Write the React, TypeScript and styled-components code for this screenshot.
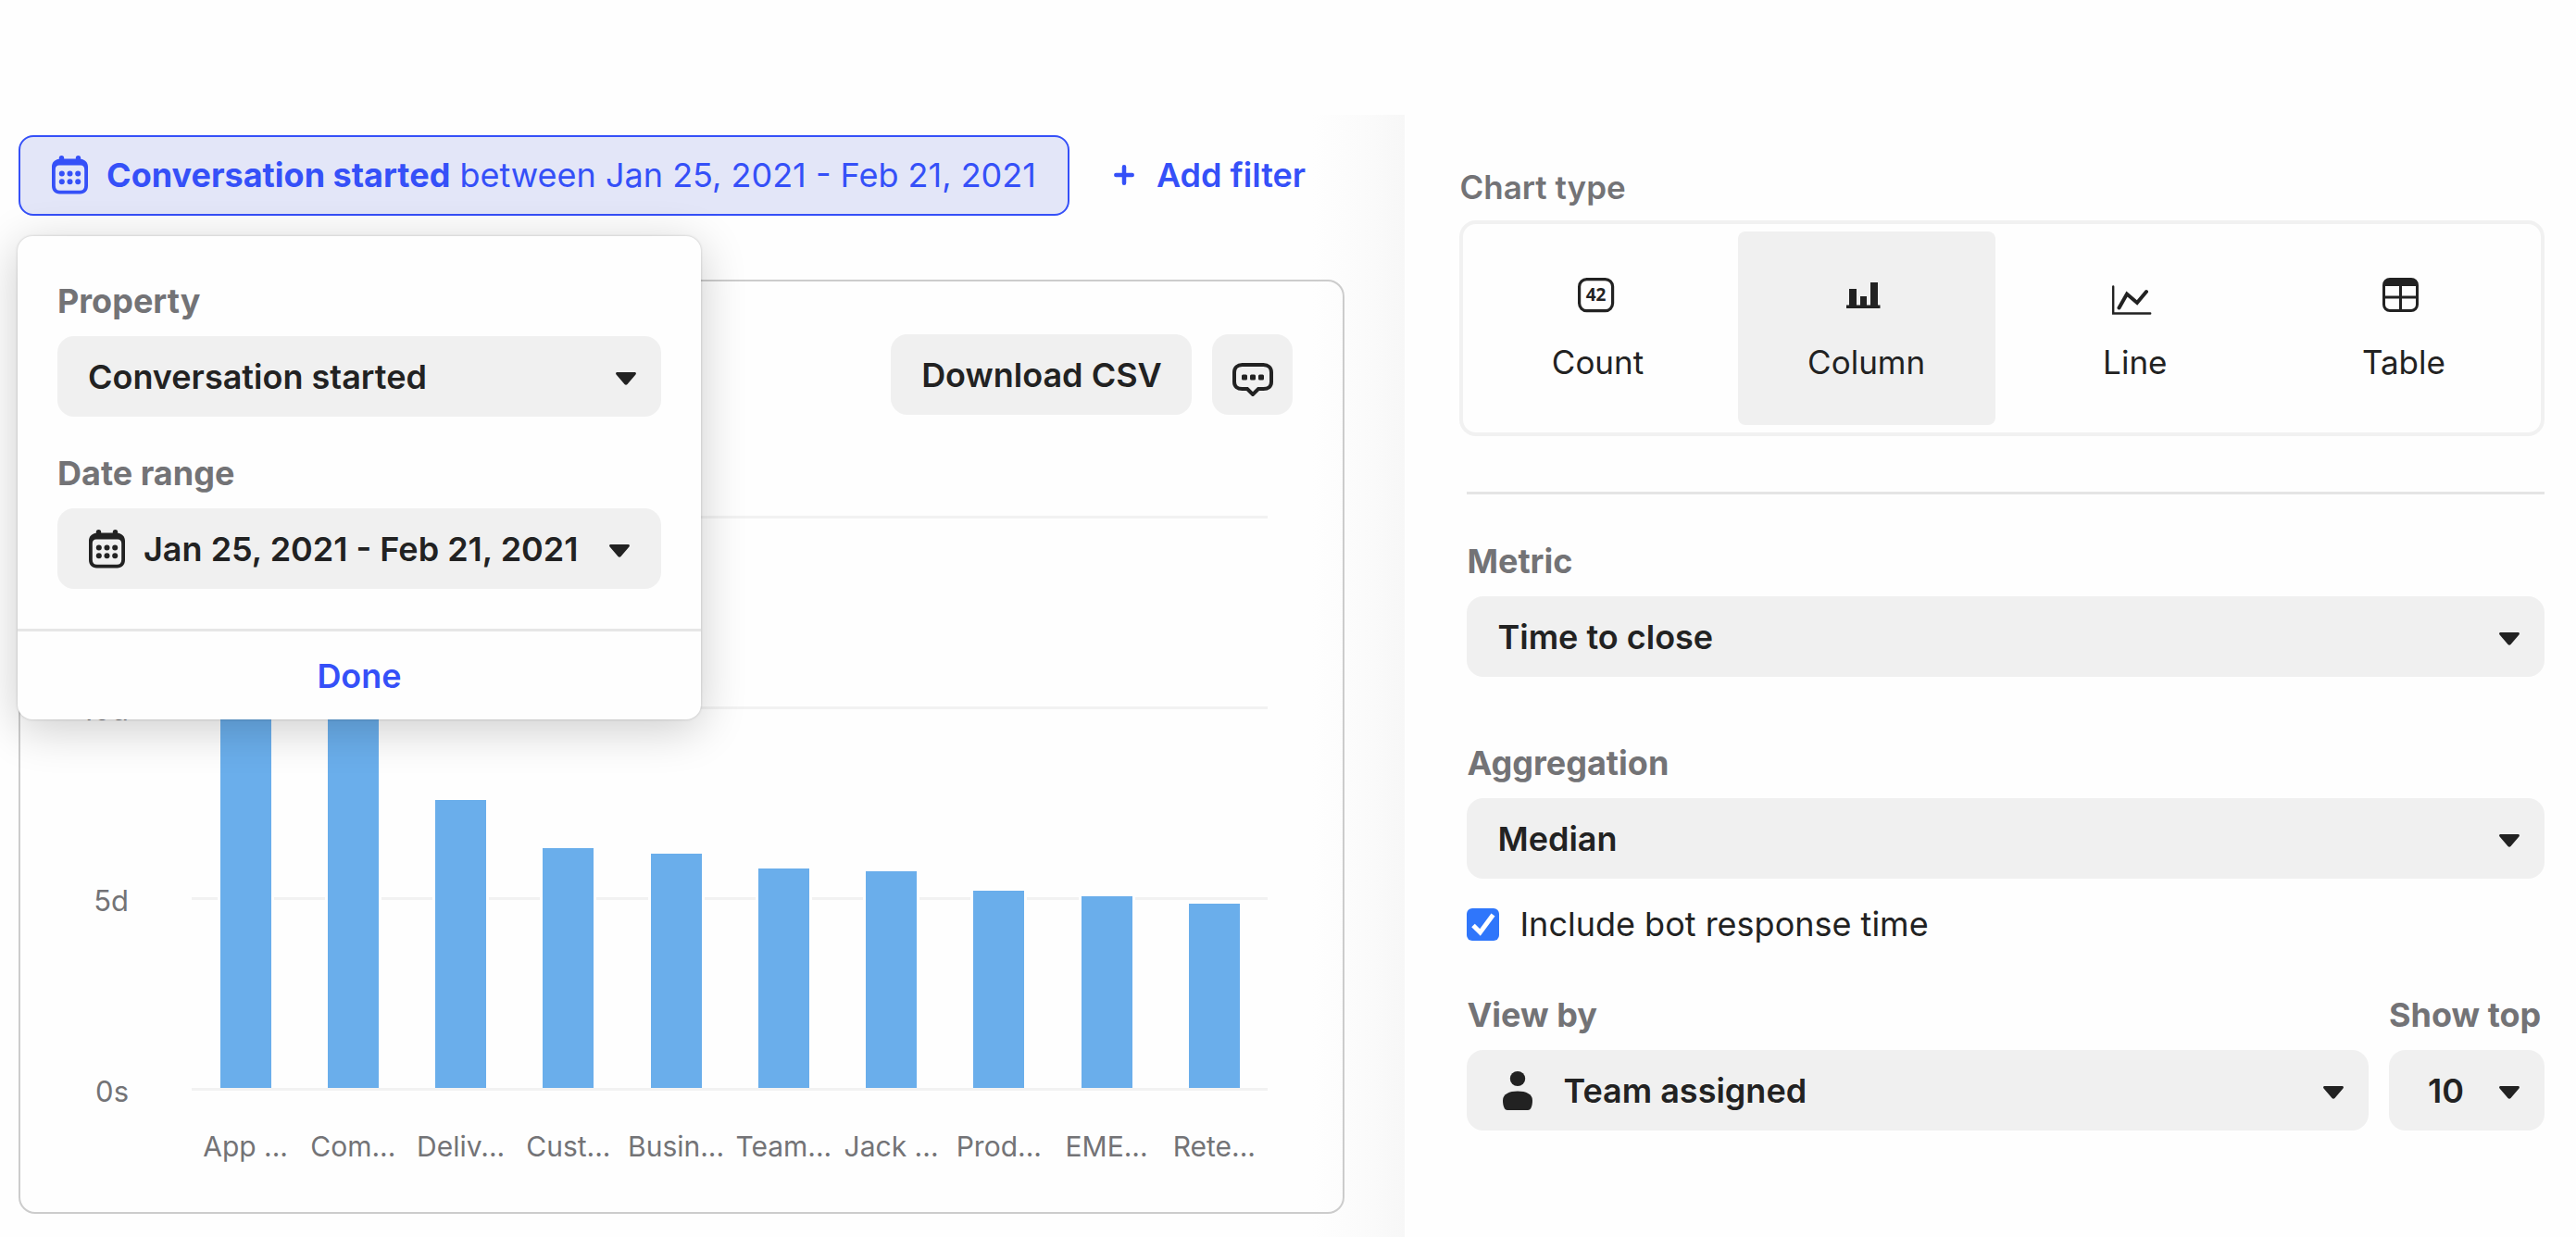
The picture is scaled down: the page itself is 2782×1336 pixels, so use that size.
import React, { useState } from "react";
import styled, { createGlobalStyle, css } from "styled-components";

const blue = "#3550f8";
const ink = "#222222";
const muted = "#737376";
const fill = "#f0f0f0";

const GlobalStyle = createGlobalStyle`
  *, *::before, *::after { box-sizing: border-box; }
  body {
    margin: 0;
    background: #fefefe;
    color: ${ink};
    font-family: Inter, "Liberation Sans", sans-serif;
    font-size: 36px;
    line-height: 44px;
  }
  button, select, input { font: inherit; color: inherit; }
`;

const Page = styled.div`
  display: grid;
  grid-template-columns: 6fr 5fr;
  min-height: 100vh;
  padding-top: 124px;
`;

const Report = styled.main`
  min-width: 0;
  padding: 22px 65px 25px 20px;
  background: linear-gradient(to left, #f7f7f7, #fbfbfb 45px, #fefefe 100px);
`;

const FilterBar = styled.div`
  display: flex;
  align-items: center;
  gap: 48px;
  margin-bottom: 69px;
`;

const FilterAnchor = styled.div`
  position: relative;
`;

const FilterPill = styled.button`
  display: flex;
  align-items: center;
  gap: 20px;
  height: 87px;
  padding: 0 34px 2px;
  border: 2px solid ${blue};
  border-radius: 16px;
  background: #e3e6f8;
  color: ${blue};
  white-space: nowrap;
  cursor: pointer;
`;

const Strong = styled.strong`
  font-weight: 700;
`;

const LinkButton = styled.button`
  display: flex;
  align-items: center;
  gap: 24px;
  padding: 0 0 2px;
  border: 0;
  background: none;
  color: ${blue};
  font-weight: 600;
  white-space: nowrap;
  cursor: pointer;
`;

const Popover = styled.div`
  position: absolute;
  z-index: 1;
  top: calc(100% + 22px);
  left: -1px;
  width: 738px;
  border-radius: 16px;
  background: #fefefe;
  box-shadow: 0 0 3px rgba(0, 0, 0, 0.2), 0 10px 50px rgba(0, 0, 0, 0.2);
`;

const PopoverBody = styled.div`
  display: flex;
  flex-direction: column;
  gap: 39px;
  padding: 48px 43px 43px;
`;

const DoneButton = styled.button`
  display: block;
  width: 100%;
  height: 98px;
  border: 0;
  border-top: 3px solid #e6e6e6;
  background: none;
  color: ${blue};
  font-weight: 600;
  cursor: pointer;
`;

const FieldBox = styled.div`
  display: flex;
  flex-direction: column;
  gap: 16px;
  min-width: 0;
`;

const FieldLabel = styled.label`
  color: ${muted};
  font-weight: 700;
  white-space: nowrap;
`;

const control = css`
  height: 87px;
  border: 0;
  border-radius: 18px;
  background: ${fill};
  font-weight: 600;
  cursor: pointer;
`;

const SelectShell = styled.div`
  display: grid;
  align-items: center;
  > * { grid-area: 1 / 1; }
`;

const NativeSelect = styled.select<{ $inset: number }>`
  ${control}
  width: 100%;
  padding: 0 60px 0 ${(p) => p.$inset}px;
  appearance: none;
`;

const CaretSlot = styled.span`
  display: flex;
  justify-self: end;
  padding-right: 27px;
  pointer-events: none;
`;

const IconSlot = styled.span`
  display: flex;
  z-index: 1;
  justify-self: start;
  padding-left: 39px;
  pointer-events: none;
`;

const DateButton = styled.button`
  ${control}
  display: flex;
  align-items: center;
  gap: 20px;
  padding: 0 34px;
  white-space: nowrap;
  > :last-child { margin-left: auto; }
`;

const Card = styled.section`
  display: flex;
  flex-direction: column;
  padding: 57px 54px 49px 60px;
  border: 2px solid #cccccc;
  border-radius: 18px;
`;

const Toolbar = styled.div`
  display: flex;
  justify-content: flex-end;
  gap: 22px;
  margin-bottom: 91px;
`;

const ToolButton = styled.button<{ $square?: boolean }>`
  ${control}
  display: flex;
  align-items: center;
  justify-content: center;
  padding: 0;
  width: ${(p) => (p.$square ? "87px" : "325px")};
  white-space: nowrap;
`;

const Chart = styled.div`
  display: grid;
  grid-template-columns: 57px 1fr;
  column-gap: 68px;
  padding-right: 27px;
  color: ${muted};
  font-size: 31px;
`;

const YAxis = styled.div`
  display: flex;
  flex-direction: column;
  justify-content: space-between;
  text-align: right;
`;

const Plot = styled.div`
  display: grid;
  padding: 18px 0 23px;
  height: 662px;
  > * { grid-area: 1 / 1; }
`;

const GridLines = styled.div`
  display: flex;
  flex-direction: column;
  justify-content: space-between;
`;

const GridLine = styled.div`
  height: 3px;
  background: #f2f2f2;
`;

const Bars = styled.div`
  display: grid;
  grid-template-columns: repeat(10, 1fr);
  align-items: end;
  justify-items: center;
  padding-bottom: 3px;
`;

const Bar = styled.div`
  width: 55px;
  background: #6aaeeb;
  box-shadow: -3px 0 #fefefe, 3px 0 #fefefe;
`;

const XAxis = styled.div`
  display: grid;
  grid-column: 2;
  grid-template-columns: repeat(10, 1fr);
  margin-top: 15px;
  font-size: 30px;
  text-align: center;
  white-space: nowrap;
`;

const Settings = styled.aside`
  min-width: 0;
  padding: 56px 34px 40px 59px;
`;

const ChartTypes = styled.fieldset`
  min-width: 0;
  margin: 0 0 60px;
  padding: 0;
  border: 0;
  font-size: 35px;
`;

const Legend = styled.legend`
  padding: 0;
  margin-bottom: 14px;
  color: ${muted};
  font-weight: 600;
`;

const TypeGrid = styled.div`
  display: grid;
  grid-template-columns: repeat(4, 1fr);
  padding-right: 3px;
  border: 4px solid #f1f1f1;
  border-radius: 18px;
`;

const TypeOption = styled.label`
  display: flex;
  flex-direction: column;
  align-items: center;
  gap: 29px;
  margin: 8px 6px;
  padding: 50px 0 46px;
  border-radius: 8px;
  cursor: pointer;
  &:has(input:checked) { background: ${fill}; }
`;

const HiddenRadio = styled.input`
  position: absolute;
  opacity: 0;
  pointer-events: none;
`;

const Options = styled.div`
  padding: 50px 0 0;
  margin-left: 8px;
  border-top: 3px solid #e5e5e5;
`;

const Row = styled.div`
  display: grid;
  grid-template-columns: 1fr 168px;
  gap: 22px;
  margin-top: 54px;
`;

const AggregationGroup = styled.div`
  display: flex;
  flex-direction: column;
  gap: 27px;
  margin-top: 71px;
`;

const CheckRow = styled.label`
  display: flex;
  align-items: center;
  gap: 22px;
`;

const CheckShell = styled.span`
  display: grid;
  > * { grid-area: 1 / 1; }
`;

const CheckInput = styled.input`
  width: 35px;
  height: 35px;
  margin: 0;
  border: 2px solid #bbbbbb;
  border-radius: 6px;
  appearance: none;
  &:checked { border: 0; background: #2f76fb; }
  & + svg { visibility: hidden; pointer-events: none; }
  &:checked + svg { visibility: visible; }
`;

const Caret = () => (
  <svg width="22" height="18" viewBox="0 -4 22 18" fill="currentColor" aria-hidden="true">
    <path d="M1.6 0h18.8c1.4 0 2 1.400 1.100 2.400l-9 10.600c-.8.900-2.200.900-3 0L.5 2.400C-.4 1.400.2 0 1.600 0z" />
  </svg>
);

const CalendarIcon = () => (
  <svg width="39" height="42" viewBox="0 0 39 42" fill="currentColor" aria-hidden="true">
    <path
      fillRule="evenodd"
      d="M10.500 0a2.700 2.700 0 0 1 2.700 2.700V3.500h12.600V2.700a2.700 2.700 0 0 1 5.400 0V3.700C36 4.300 39 7.500 39 12V32.500c0 5.500-3.200 9-8.500 9h-22C3.200 41.500 0 38 0 32.500V12C0 7.500 3 4.300 7.800 3.700V2.700A2.700 2.700 0 0 1 10.500 0zM8 10.500C5.200 10.500 3.800 12 3.800 15v17.500c0 3.500 1.700 5.200 5 5.200h21.400c3.300 0 5-1.700 5-5.200V15c0-3-1.400-4.500-4.200-4.500z"
    />
    {[10.800, 19.500, 28.200].map((x) =>
      [19.500, 28.200].map((y) => <circle key={`${x}-${y}`} cx={x} cy={y} r="3" />)
    )}
  </svg>
);

const PlusIcon = () => (
  <svg width="22" height="22" viewBox="0 0 22 22" fill="none" stroke="currentColor" strokeWidth="4.500" strokeLinecap="round" aria-hidden="true">
    <path d="M11 2.300v17.400M2.300 11h17.400" />
  </svg>
);

const MessageIcon = () => (
  <svg width="44" height="46" viewBox="0 -10 44 46" fill="none" stroke="currentColor" strokeWidth="4" aria-hidden="true">
    <path d="M10.500 2h23c5 0 8.500 3 8.500 8v10.500c0 5-3.500 7.500-8.500 7.500H28l-6 6-6-6h-5.500C5.500 28 2 25.500 2 20.500V10c0-5 3.500-8 8.500-8z" />
    <g fill="currentColor" stroke="none">
      <rect x="10" y="12.500" width="6" height="6" rx="1.500" />
      <rect x="19" y="12.500" width="6" height="6" rx="1.500" />
      <rect x="28" y="12.500" width="6" height="6" rx="1.500" />
    </g>
  </svg>
);

const PersonIcon = () => (
  <svg width="32" height="42" viewBox="0 0 32 42" fill="currentColor" aria-hidden="true">
    <ellipse cx="16" cy="8" rx="8.200" ry="8" />
    <path d="M16 21.500c9 0 16 3 16 10 0 5.500-1.500 10.500-5 10.500H5c-3.500 0-5-5-5-10.500 0-7 7-10 16-10z" />
  </svg>
);

const CheckIcon = () => (
  <svg width="35" height="35" viewBox="0 0 35 35" fill="none" stroke="#ffffff" strokeWidth="5" aria-hidden="true">
    <path d="M7 18.500l7.500 7.500L28.500 7" />
  </svg>
);

const CountIcon = () => (
  <svg width="44" height="40" viewBox="0 0 44 40" fill="none" stroke="currentColor" strokeWidth="3.200" aria-hidden="true">
    <rect x="1.600" y="1.600" width="36" height="34" rx="8" />
    <text x="19.600" y="25" textAnchor="middle" fontFamily="Open Sans, sans-serif" fontWeight="700" fontSize="19" fill="currentColor" stroke="none">42</text>
  </svg>
);

const ColumnIcon = () => (
  <svg width="44" height="40" viewBox="0 0 44 40" fill="currentColor" aria-hidden="true">
    <path d="M3 12h8v17.500h4V20h7v9.500h4V5h8v24.500h2.500V33H0v-3.500h3z" />
  </svg>
);

const LineIcon = () => (
  <svg width="50" height="40" viewBox="0 0 50 40" fill="none" stroke="currentColor" aria-hidden="true">
    <path strokeWidth="2.400" strokeLinecap="round" strokeLinejoin="miter" d="M1.200 9.500v29h40" />
    <path strokeWidth="4" strokeLinecap="round" d="M7.500 32.500l8.500-15 11 9.500 10-12" />
  </svg>
);

const TableIcon = () => (
  <svg width="46" height="40" viewBox="0 0 46 40" fill="none" stroke="currentColor" strokeWidth="3" aria-hidden="true">
    <rect x="1.500" y="1.500" width="36" height="34" rx="6.500" />
    <path fill="currentColor" stroke="none" d="M1 8c0-5 2-7 7-7h23c5 0 7 2 7 7v1H1z" />
    <path d="M19.500 8v28M2 21h35" />
  </svg>
);

const series = [
  { name: "App ...", days: 13.500 },
  { name: "Com...", days: 11.200 },
  { name: "Deliv...", days: 7.540 },
  { name: "Cust...", days: 6.280 },
  { name: "Busin...", days: 6.140 },
  { name: "Team...", days: 5.760 },
  { name: "Jack ...", days: 5.670 },
  { name: "Prod...", days: 5.160 },
  { name: "EME...", days: 5.020 },
  { name: "Rete...", days: 4.820 },
];
const maxDays = 15;

const chartTypes = [
  { name: "Count", Icon: CountIcon },
  { name: "Column", Icon: ColumnIcon },
  { name: "Line", Icon: LineIcon },
  { name: "Table", Icon: TableIcon },
];

type SelectFieldProps = {
  id: string;
  label: string;
  value: string;
  inset?: number;
  icon?: React.ReactNode;
};

const SelectField = ({ id, label, value, inset = 33, icon }: SelectFieldProps) => (
  <FieldBox>
    <FieldLabel htmlFor={id}>{label}</FieldLabel>
    <SelectShell>
      <NativeSelect id={id} $inset={inset} defaultValue={value}>
        <option>{value}</option>
      </NativeSelect>
      {icon && <IconSlot>{icon}</IconSlot>}
      <CaretSlot>
        <Caret />
      </CaretSlot>
    </SelectShell>
  </FieldBox>
);

export default function App() {
  const [type, setType] = useState("Column");

  return (
    <>
      <GlobalStyle />
      <Page>
        <Report>
          <FilterBar>
            <FilterAnchor>
              <FilterPill type="button">
                <CalendarIcon />
                <span>
                  <Strong>Conversation started</Strong> between Jan 25, 2021 - Feb 21, 2021
                </span>
              </FilterPill>
              <Popover role="dialog" aria-label="Edit filter">
                <PopoverBody>
                  <SelectField id="property" label="Property" value="Conversation started" />
                  <FieldBox>
                    <FieldLabel htmlFor="date-range">Date range</FieldLabel>
                    <DateButton id="date-range" type="button">
                      <CalendarIcon />
                      <span>Jan 25, 2021 - Feb 21, 2021</span>
                      <Caret />
                    </DateButton>
                  </FieldBox>
                </PopoverBody>
                <DoneButton type="button">Done</DoneButton>
              </Popover>
            </FilterAnchor>
            <LinkButton type="button">
              <PlusIcon />
              Add filter
            </LinkButton>
          </FilterBar>

          <Card>
            <Toolbar>
              <ToolButton type="button">Download CSV</ToolButton>
              <ToolButton type="button" $square aria-label="Comments">
                <MessageIcon />
              </ToolButton>
            </Toolbar>
            <Chart>
              <YAxis>
                <span>15d</span>
                <span>10d</span>
                <span>5d</span>
                <span>0s</span>
              </YAxis>
              <Plot>
                <GridLines>
                  <GridLine />
                  <GridLine />
                  <GridLine />
                  <GridLine />
                </GridLines>
                <Bars>
                  {series.map((s) => (
                    <Bar key={s.name} style={{ height: `${(s.days / maxDays) * 100}%` }} />
                  ))}
                </Bars>
              </Plot>
              <XAxis>
                {series.map((s) => (
                  <span key={s.name}>{s.name}</span>
                ))}
              </XAxis>
            </Chart>
          </Card>
        </Report>

        <Settings>
          <ChartTypes>
            <Legend>Chart type</Legend>
            <TypeGrid>
              {chartTypes.map(({ name, Icon }) => (
                <TypeOption key={name}>
                  <HiddenRadio
                    type="radio"
                    name="chart-type"
                    value={name}
                    checked={type === name}
                    onChange={() => setType(name)}
                  />
                  <Icon />
                  <span>{name}</span>
                </TypeOption>
              ))}
            </TypeGrid>
          </ChartTypes>
          <Options>
            <SelectField id="metric" label="Metric" value="Time to close" />
            <AggregationGroup>
              <SelectField id="aggregation" label="Aggregation" value="Median" />
              <CheckRow>
                <CheckShell>
                  <CheckInput type="checkbox" defaultChecked />
                  <CheckIcon />
                </CheckShell>
                Include bot response time
              </CheckRow>
            </AggregationGroup>
            <Row>
              <SelectField id="view-by" label="View by" value="Team assigned" inset={104} icon={<PersonIcon />} />
              <SelectField id="show-top" label="Show top" value="10" inset={42} />
            </Row>
          </Options>
        </Settings>
      </Page>
    </>
  );
}
